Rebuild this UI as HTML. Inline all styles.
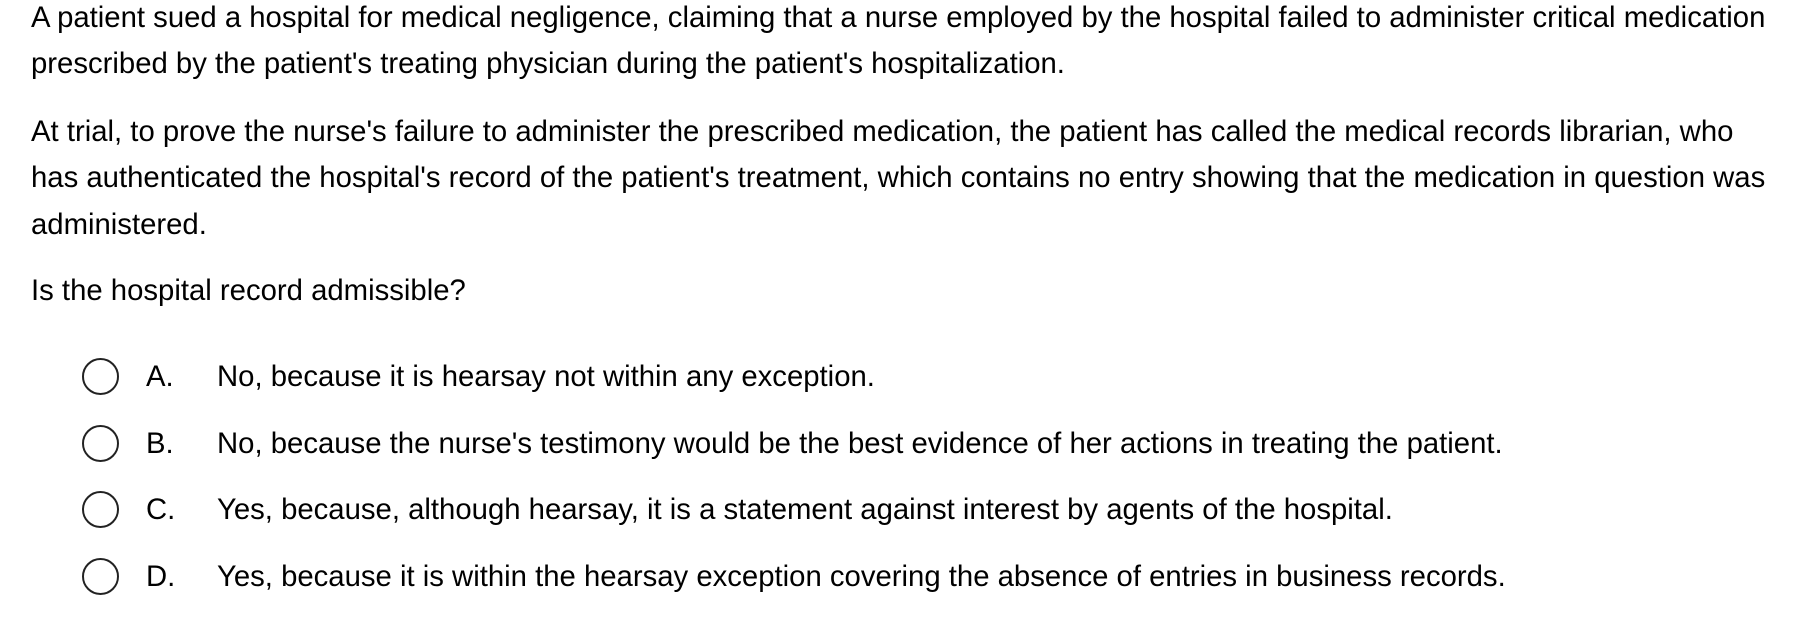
<!DOCTYPE html>
<html><head><meta charset="utf-8"><style>
html,body{margin:0;padding:0;background:#fff;width:1817px;height:623px;overflow:hidden}
body{font-family:"Liberation Sans",Arial,sans-serif;font-size:29.3px;color:#000;position:relative}
.l{position:absolute;left:31px;white-space:nowrap;line-height:47px}
.c{position:absolute;left:82px;width:37px;height:37px;border:2px solid #222;border-radius:50%;box-sizing:border-box}
.k{position:absolute;left:146px;white-space:nowrap;line-height:47px}
.t{position:absolute;left:217px;white-space:nowrap;line-height:47px}
</style></head><body>
<div class="l" style="top:-6px">A patient sued a hospital for medical negligence, claiming that a nurse employed by the hospital failed to administer critical medication</div>
<div class="l" style="top:40px">prescribed by the patient's treating physician during the patient's hospitalization.</div>
<div class="l" style="top:108px">At trial, to prove the nurse's failure to administer the prescribed medication, the patient has called the medical records librarian, who</div>
<div class="l" style="top:154px">has authenticated the hospital's record of the patient's treatment, which contains no entry showing that the medication in question was</div>
<div class="l" style="top:201px">administered.</div>
<div class="l" style="top:267px">Is the hospital record admissible?</div>

<div class="c" style="top:358px"></div><div class="k" style="top:353px">A.</div><div class="t" style="top:353px">No, because it is hearsay not within any exception.</div>
<div class="c" style="top:425px"></div><div class="k" style="top:420px">B.</div><div class="t" style="top:420px">No, because the nurse's testimony would be the best evidence of her actions in treating the patient.</div>
<div class="c" style="top:491px"></div><div class="k" style="top:486px">C.</div><div class="t" style="top:486px">Yes, because, although hearsay, it is a statement against interest by agents of the hospital.</div>
<div class="c" style="top:558px"></div><div class="k" style="top:553px">D.</div><div class="t" style="top:553px">Yes, because it is within the hearsay exception covering the absence of entries in business records.</div>
</body></html>
